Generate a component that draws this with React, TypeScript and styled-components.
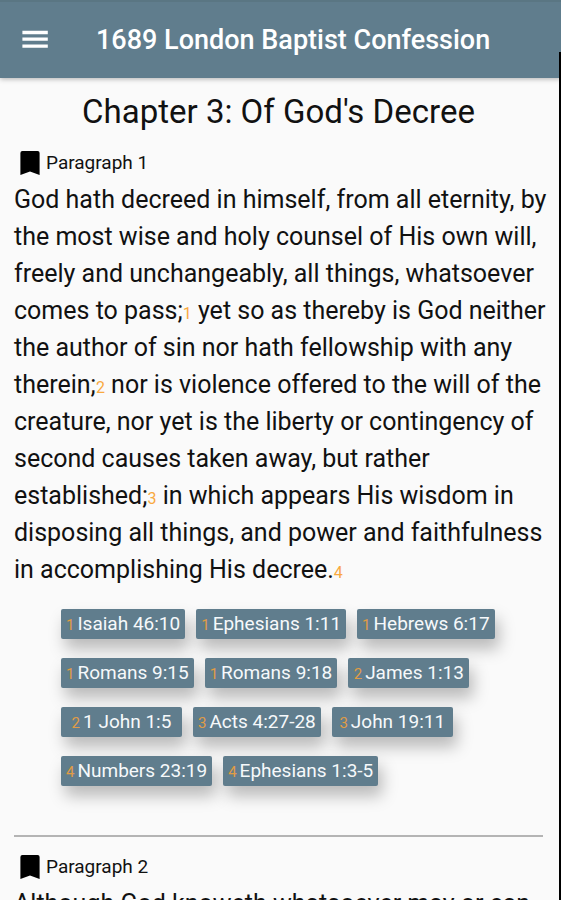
import React from "react";
import styled, { createGlobalStyle } from "styled-components";

const GlobalStyle = createGlobalStyle`
  *, *::before, *::after { box-sizing: border-box; }
  html, body { margin: 0; padding: 0; }
  body {
    background: #fafafa;
    color: #111;
    font-family: Roboto, "Liberation Sans", sans-serif;
    overflow: hidden;
  }
`;

const Screen = styled.div`
  position: relative;
  display: flex;
  flex-direction: column;
  height: 100vh;
  overflow: hidden;
`;

const AppBar = styled.header`
  display: flex;
  align-items: center;
  flex: none;
  height: 78px;
  padding: 0 16px 0 20px;
  gap: 46px;
  background: #607d8d;
  border-top: 2px solid #5a7683;
  box-shadow: 0 1px 5px rgba(0, 0, 0, 0.3);
  z-index: 1;
`;

const MenuButton = styled.button`
  display: flex;
  padding: 0;
  border: 0;
  background: none;
  color: #fff;
  cursor: pointer;
`;

const AppTitle = styled.h1`
  margin: 0;
  color: #fff;
  font-size: 27px;
  font-weight: 500;
  line-height: 36px;
  white-space: nowrap;
`;

const Reader = styled.main`
  flex: 1;
  min-height: 0;
  overflow: hidden;
  padding: 12px 14px 0;
`;

const ChapterTitle = styled.h2`
  margin: 0 0 17px;
  padding-right: 4px;
  font-size: 33px;
  font-weight: 400;
  line-height: 44px;
  text-align: center;
`;

const Divider = styled.hr`
  height: 2px;
  margin: 33px 4px 18px 0;
  border: 0;
  background: #b4b4b4;
`;

const ParagraphHeading = styled.h3`
  display: flex;
  align-items: center;
  gap: 6px;
  margin: 0 0 6px;
  padding-left: 6px;
  font-size: 19px;
  font-weight: 400;
  line-height: 24px;
`;

const BookmarkButton = styled.button`
  display: flex;
  padding: 0;
  border: 0;
  background: none;
  color: #000;
  cursor: pointer;
`;

const Body = styled.p`
  margin: 0;
  font-size: 25px;
  line-height: 37px;
`;

const NoteLink = styled.a`
  color: #f9a93f;
  font-size: 16px;
  line-height: 1;
  text-decoration: none;
`;

const References = styled.div`
  display: flex;
  flex-wrap: wrap;
  gap: 19px 11px;
  margin-top: 21px;
  padding: 0 44px 16px 47px;
`;

const ReferenceChip = styled.button`
  display: flex;
  align-items: baseline;
  justify-content: center;
  gap: 3px;
  min-width: 121px;
  height: 30px;
  padding: 0 5px;
  border: 0;
  border-radius: 2px;
  background: #607d8d;
  box-shadow: 4px 10px 16px rgba(0, 0, 0, 0.26);
  color: #f6f9fb;
  font-family: inherit;
  font-size: 19px;
  line-height: 30px;
  white-space: nowrap;
  cursor: pointer;
`;

const ChipNumber = styled.span`
  color: #e09c45;
  font-size: 15px;
`;

const ScreenEdge = styled.div`
  position: absolute;
  top: 52px;
  right: 0;
  bottom: 0;
  width: 2px;
  background: #000;
  z-index: 2;
`;

const MenuIcon = () => (
  <svg width="30" height="30" viewBox="0 0 30 30" fill="currentColor" aria-hidden="true">
    <path d="M2.4 5.8h25.4v3.4H2.4zM2.4 12.4h25.4v3.4H2.4zM2.4 19.4h25.4v3.4H2.4z" />
  </svg>
);

const BookmarkIcon = () => (
  <svg width="20" height="24" viewBox="0 0 20 24" fill="currentColor" aria-hidden="true">
    <path d="M2.4 0h15.2a2 2 0 0 1 2 2v22L10 20.6.4 24V2a2 2 0 0 1 2-2z" />
  </svg>
);

type Reference = { note: number; label: string };

const references: Reference[] = [
  { note: 1, label: "Isaiah 46:10" },
  { note: 1, label: "Ephesians 1:11" },
  { note: 1, label: "Hebrews 6:17" },
  { note: 1, label: "Romans 9:15" },
  { note: 1, label: "Romans 9:18" },
  { note: 2, label: "James 1:13" },
  { note: 2, label: "1 John 1:5" },
  { note: 3, label: "Acts 4:27-28" },
  { note: 3, label: "John 19:11" },
  { note: 4, label: "Numbers 23:19" },
  { note: 4, label: "Ephesians 1:3-5" },
];

const Note = ({ n }: { n: number }) => <NoteLink href={`#note-${n}`}>{n}</NoteLink>;

const Heading = ({ n }: { n: number }) => (
  <ParagraphHeading>
    <BookmarkButton type="button" aria-label={`Bookmark paragraph ${n}`}>
      <BookmarkIcon />
    </BookmarkButton>
    Paragraph {n}
  </ParagraphHeading>
);

export default function App() {
  return (
    <>
      <GlobalStyle />
      <Screen>
        <AppBar>
          <MenuButton type="button" aria-label="Open menu">
            <MenuIcon />
          </MenuButton>
          <AppTitle>1689 London Baptist Confession</AppTitle>
        </AppBar>
        <Reader>
          <ChapterTitle>Chapter 3: Of God's Decree</ChapterTitle>
          <section>
            <Heading n={1} />
            <Body>
              God hath decreed in himself, from all eternity, by the most wise and holy counsel of
              His own will, freely and unchangeably, all things, whatsoever comes to pass;
              <Note n={1} /> yet so as thereby is God neither the author of sin nor hath fellowship
              with any therein;
              <Note n={2} /> nor is violence offered to the will of the creature, nor yet is the
              liberty or contingency of second causes taken away, but rather established;
              <Note n={3} /> in which appears His wisdom in disposing all things, and power and
              faithfulness in accomplishing His decree.
              <Note n={4} />
            </Body>
            <References>
              {references.map(({ note, label }) => (
                <ReferenceChip type="button" key={label}>
                  <ChipNumber>{note}</ChipNumber>
                  <span>{label}</span>
                </ReferenceChip>
              ))}
            </References>
          </section>
          <Divider />
          <section>
            <Heading n={2} />
            <Body>Although God knoweth whatsoever may or can</Body>
          </section>
        </Reader>
        <ScreenEdge />
      </Screen>
    </>
  );
}
